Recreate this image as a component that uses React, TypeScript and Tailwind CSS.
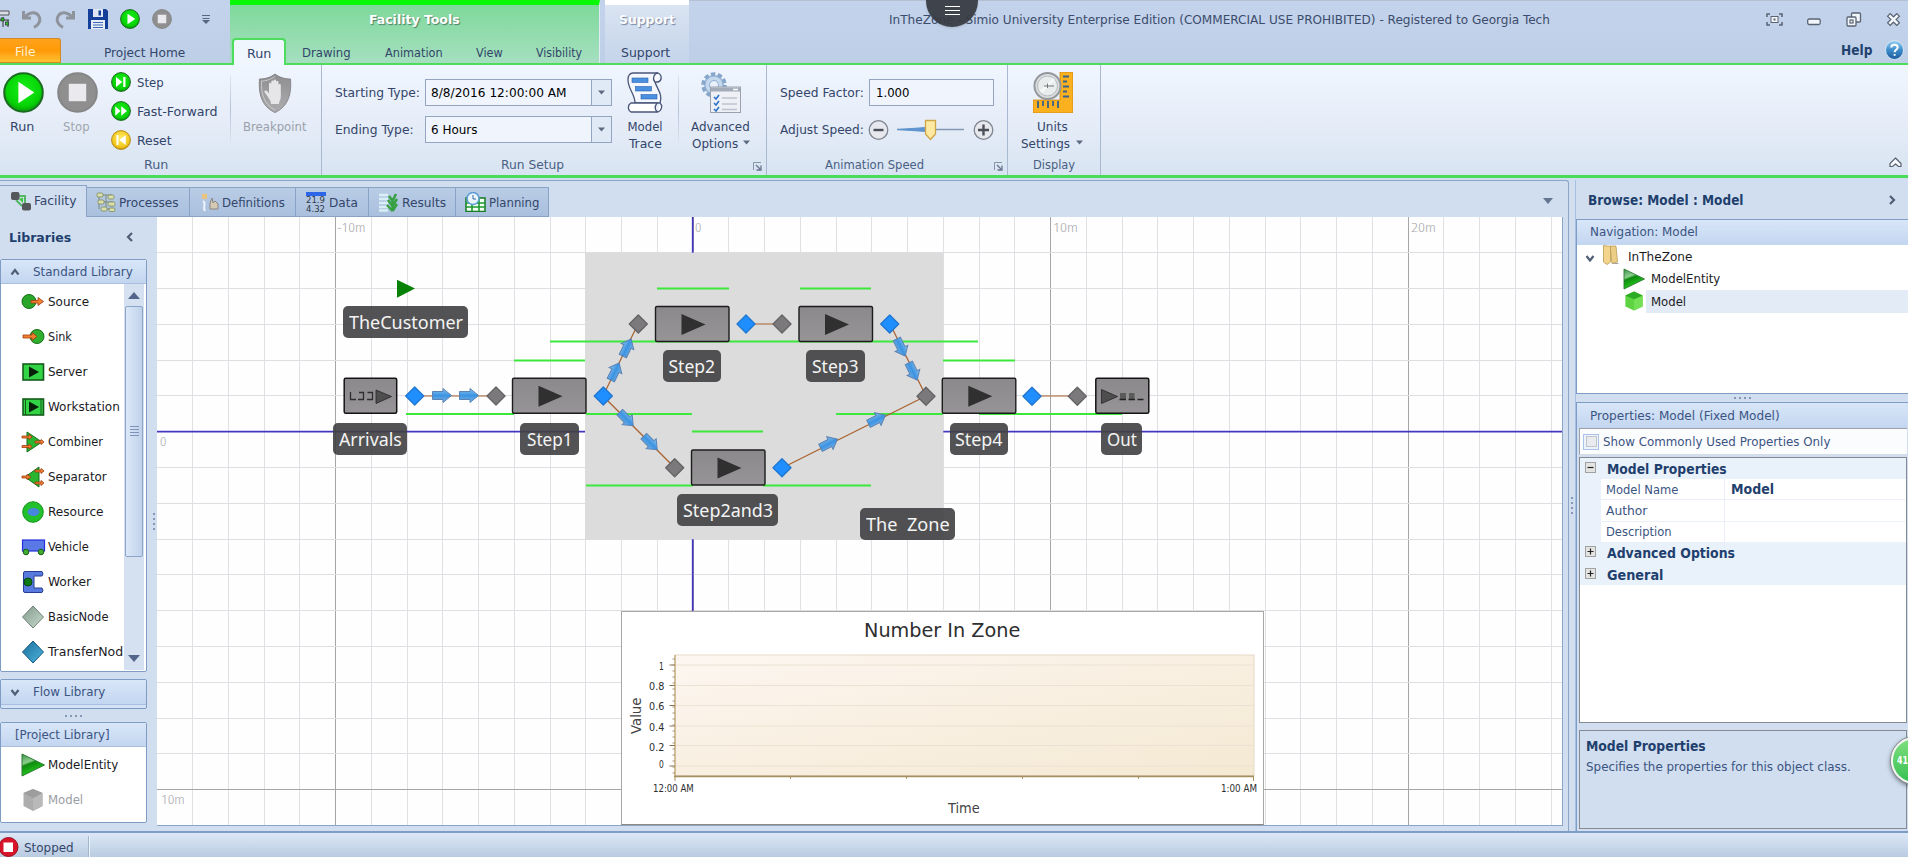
import { useLayoutEffect, useRef, type ReactNode } from 'react';

/* Text fitted to a fixed advance width. */
function T({ w, children, className = '' }: { w: number; children: string; className?: string }) {
  const inner = useRef<HTMLSpanElement>(null);
  useLayoutEffect(() => {
    const el = inner.current;
    if (el && el.offsetWidth) el.style.transform = `scaleX(${w / el.offsetWidth})`;
  }, [w, children]);
  return (
    <span className={`inline-block shrink-0 whitespace-pre ${className}`} style={{ width: w }}>
      <span ref={inner} className="inline-block origin-left">{children}</span>
    </span>
  );
}

function Defs() {
  return (
    <svg className="absolute h-0 w-0" aria-hidden="true">
      <defs>
        <radialGradient id="gGreen" cx="50%" cy="40%" r="60%">
          <stop offset="0" stopColor="#17ee17" />
          <stop offset="0.75" stopColor="#06d306" />
          <stop offset="1" stopColor="#089a08" />
        </radialGradient>
        <radialGradient id="gGold" cx="50%" cy="40%" r="60%">
          <stop offset="0" stopColor="#fff06a" />
          <stop offset="0.8" stopColor="#f2c51a" />
          <stop offset="1" stopColor="#c89510" />
        </radialGradient>
        <linearGradient id="gTri" x1="0" y1="0" x2="0.4" y2="1">
          <stop offset="0" stopColor="#3f8f4a" />
          <stop offset="0.4" stopColor="#8ccf8e" />
          <stop offset="0.5" stopColor="#0f8a10" />
          <stop offset="1" stopColor="#27d61c" />
        </linearGradient>
        <linearGradient id="gSrv" x1="0" y1="0" x2="0" y2="1">
          <stop offset="0" stopColor="#8b898b" />
          <stop offset="1" stopColor="#969496" />
        </linearGradient>
        <linearGradient id="gArrow" x1="0" y1="0" x2="0" y2="1">
          <stop offset="0" stopColor="#8fc4ef" />
          <stop offset="0.5" stopColor="#3b93e2" />
          <stop offset="1" stopColor="#7db4e6" />
        </linearGradient>
        <linearGradient id="gShield" x1="0" y1="0" x2="0" y2="1">
          <stop offset="0" stopColor="#8e8e90" />
          <stop offset="1" stopColor="#adadaf" />
        </linearGradient>
        <linearGradient id="gNode" x1="0" y1="0" x2="1" y2="1">
          <stop offset="0" stopColor="#83988b" />
          <stop offset="1" stopColor="#c8dccf" />
        </linearGradient>
        <linearGradient id="gTransfer" x1="0" y1="0" x2="1" y2="1">
          <stop offset="0" stopColor="#1c6f9c" />
          <stop offset="1" stopColor="#4db4dc" />
        </linearGradient>
        <linearGradient id="gHelp" x1="0" y1="0" x2="0" y2="1">
          <stop offset="0" stopColor="#9ed4f2" />
          <stop offset="0.5" stopColor="#3c8dcc" />
          <stop offset="1" stopColor="#1b5a9c" />
        </linearGradient>
        <linearGradient id="gPlot" x1="0" y1="0" x2="1" y2="1">
          <stop offset="0" stopColor="#fdf6f0" />
          <stop offset="0.45" stopColor="#f9f0e3" />
          <stop offset="1" stopColor="#f4e9d2" />
        </linearGradient>
      </defs>
    </svg>
  );
}

function Round({ size, kind }: { size: number; kind: 'play' | 'stop' | 'step' | 'ff' | 'reset' }) {
  const fill = kind === 'stop' ? '#8f8f8f' : kind === 'reset' ? 'url(#gGold)' : 'url(#gGreen)';
  const edge = kind === 'stop' ? '#868686' : kind === 'reset' ? '#b58a18' : '#1c6b22';
  return (
    <svg width={size} height={size} viewBox="0 0 40 40" className="shrink-0">
      <circle cx="20" cy="20" r="18.8" fill={fill} stroke={edge} strokeWidth="2" />
      {kind === 'play' && <path d="M15 9.5V30.5L30.500 20Z" fill="#fff" />}
      {kind === 'stop' && <rect x="11.500" y="11.500" width="17" height="17" fill="#e9e9ee" />}
      {kind === 'step' && <path d="M10 10V30L22.500 20ZM24.500 10H29V30H24.500Z" fill="#fff" />}
      {kind === 'ff' && <path d="M8.500 10.500V29.500L19 20ZM20.500 10.500V29.500L32 20Z" fill="#fff" />}
      {kind === 'reset' && <path d="M29.500 10V30L17 20ZM11 10H15V30H11Z" fill="#fff" />}
    </svg>
  );
}

const Down = ({ className = '' }: { className?: string }) => (
  <svg width="7" height="5" viewBox="0 0 7 5" className={`shrink-0 ${className}`}><path d="M0 0.500H7L3.500 4.500Z" fill="#5d6b82" /></svg>
);

function Big({ icon, children, className }: { icon: ReactNode; children: ReactNode; className: string }) {
  return (
    <div className={`flex flex-col items-center pt-[7px] ${className}`}>
      <div className="mb-[5px] flex h-[41px] items-center">{icon}</div>
      {children}
    </div>
  );
}
const Line = ({ children }: { children: ReactNode }) => <div className="flex h-[17px] items-center">{children}</div>;

function Group({ className, caption, launcher, children }: { className: string; caption: ReactNode; launcher?: boolean; children: ReactNode }) {
  return (
    <div className={`flex shrink-0 flex-col border-r border-[#a9b9d2] ${className}`}>
      <div className="flex h-[89px]">{children}</div>
      <div className="flex h-[21px] items-center text-[#4a5f84]">
        {caption}
        {launcher && (
          <svg width="9" height="9" viewBox="0 0 9 9" className="mt-[3px] mr-[4px] ml-auto shrink-0"><path d="M0.500 8V0.500H8" fill="none" stroke="#8795ab" /><path d="M3 3L7 7M8 3.500V8H3.500" fill="none" stroke="#66748c" strokeWidth="1.300" /></svg>
        )}
      </div>
    </div>
  );
}

function Combo({ w, text }: { w: number; text: string }) {
  return (
    <div className="flex h-[27px] w-[187px] items-center border border-[#93a5c0] bg-[#f0f5fd] pl-[5px] text-black">
      <T w={w}>{text}</T>
      <div className="ml-auto flex h-full w-[20px] items-center justify-center border-l border-[#93a5c0] bg-[#e0e9f6]"><Down /></div>
    </div>
  );
}

function Header() {
  return (
    <div className="flex h-[65px] border-b-2 border-[#4ddc5c] bg-linear-to-b from-[#c3d3ec] to-[#bdcfe6]">
      <div className="flex w-[230px] shrink-0 flex-col">
        <div className="flex h-[38px] items-center">
          <svg width="10" height="20" viewBox="0 0 10 20"><path d="M0 2H9V6H0" fill="#d8dde6" stroke="#555" /><path d="M0 11H9M3 8V18M8 11V18" stroke="#333" fill="none" /><rect x="1" y="9" width="3" height="3" fill="#2cc02c" stroke="#222" strokeWidth=".6" /><rect x="5.500" y="13" width="3" height="3" fill="#2cc02c" stroke="#222" strokeWidth=".6" /></svg>
          <svg width="20" height="20" viewBox="0 0 20 20" className="ml-[12px]"><path d="M1.500 2V9H9M2.500 8.500C6 3.500 13 2 16.500 6.500C19.500 11 17 16 12 18.500" fill="none" stroke="#8e939c" strokeWidth="3" /></svg>
          <svg width="20" height="20" viewBox="0 0 20 20" className="ml-[13px]"><path d="M18.500 2V9H11M17.500 8.500C14 3.500 7 2 3.500 6.500C.5 11 3 16 8 18.500" fill="none" stroke="#8e939c" strokeWidth="3" /></svg>
          <svg width="20" height="20" viewBox="0 0 20 20" className="ml-[13px]"><path d="M0 0H18L20 2V20H0Z" fill="#15409a" /><rect x="5" y="0" width="10" height="8" fill="#dfe7f4" /><rect x="10.500" y="1.500" width="2.500" height="5" fill="#15409a" /><rect x="3" y="11" width="14" height="9" fill="#e8eef8" /><path d="M5 13.500H15M5 16H15M5 18.500H15" stroke="#3a68b4" /></svg>
          <div className="ml-[12px] flex"><Round size={20} kind="play" /></div>
          <div className="ml-[12px] flex"><Round size={20} kind="stop" /></div>
          <svg width="8" height="9" viewBox="0 0 8 9" className="ml-[30px]"><path d="M0 .5H8M.5 3.500H7.500" stroke="#5a6680" /><path d="M0 5H8L4 9Z" fill="#5a6680" /></svg>
        </div>
        <div className="flex h-[25px] items-center">
          <div className="flex h-[25px] w-[61px] items-center rounded-tr-[3px] border border-l-0 border-[#d18a28] bg-linear-to-b from-[#ffa21a] via-[#ff9a05] to-[#ffc02e] pt-[2px] pl-[15px] text-[#fff2d0]"><T w={20}>File</T></div>
          <T w={81} className="mt-[3px] ml-[43px]">Project Home</T>
        </div>
      </div>
      <div className="flex w-[370px] shrink-0 flex-col border-t-[5px] border-r border-r-[#dfeaf3] border-t-[#08f808] bg-linear-to-b from-[#7ed99a] to-[#a5dfc0]">
        <div className="flex h-[33px] shrink-0 items-center justify-center pb-[4px] font-bold text-white [text-shadow:1px_1px_1px_#4d7f68]"><T w={91}>Facility Tools</T></div>
        <div className="flex h-[25px] shrink-0 items-center pt-[3px]">
          <div className="-mt-[3px] ml-[2px] flex h-[27px] w-[54px] items-center justify-center self-start rounded-t-[4px] border-2 border-b-0 border-[#4ddc5c] bg-[#f0f6fe] pt-px"><T w={24}>Run</T></div>
          <T w={49} className="ml-[16px]">Drawing</T>
          <T w={58} className="ml-[34px]">Animation</T>
          <T w={27} className="ml-[33px]">View</T>
          <T w={46} className="ml-[33px]">Visibility</T>
        </div>
      </div>
      <div className="ml-[5px] flex w-[84px] shrink-0 flex-col items-center border-t-[5px] border-white bg-linear-to-b from-[#dae4f2] to-[#c4d4ea]">
        <div className="flex h-[33px] shrink-0 items-center pb-[4px] font-bold text-[#fbfcff] [text-shadow:1px_1px_1px_#6f83a3]"><T w={56}>Support</T></div>
        <div className="flex h-[25px] shrink-0 items-center pt-[3px] pr-[3px]"><T w={49}>Support</T></div>
      </div>
      <div className="flex flex-1 flex-col border-t border-[#b4c0d2]">
        <div className="flex h-[37px] items-center pl-[200px] text-[#3c4c6c]">
          <T w={661} className="-mt-px">InTheZone - Simio University Enterprise Edition (COMMERCIAL USE PROHIBITED) - Registered to Georgia Tech</T>
          <svg width="17" height="13" viewBox="0 0 17 13" className="ml-[216px]"><path d="M1 4V1H4M13 1H16V4M16 9V12H13M4 12H1V9" fill="none" stroke="#5a6473" strokeWidth="1.500" /><rect x="5" y="3.500" width="7" height="6" fill="#f2f6fb" stroke="#5a6473" /><rect x="7.500" y="5.500" width="2" height="2" fill="#5a6473" /></svg>
          <svg width="14" height="13" viewBox="0 0 14 13" className="ml-[24px]"><rect x=".7" y="6" width="12.500" height="5.500" rx="1.500" fill="#f2f6fb" stroke="#5a6473" strokeWidth="1.300" /></svg>
          <svg width="16" height="15" viewBox="0 0 16 15" className="ml-[25px]"><rect x="5.500" y="1" width="9" height="9" rx="1" fill="#f2f6fb" stroke="#5a6473" strokeWidth="1.300" /><rect x="1" y="5" width="9" height="9" rx="1" fill="#f2f6fb" stroke="#5a6473" strokeWidth="1.300" /><rect x="4" y="8" width="3" height="3" fill="none" stroke="#5a6473" strokeWidth="1.200" /></svg>
          <svg width="15" height="13" viewBox="0 0 15 13" className="ml-[24px]"><path d="M2.500 1.500L12.500 11.500M12.500 1.500L2.500 11.500" stroke="#5a6473" strokeWidth="5" /><path d="M3.300 2.300L11.700 10.700M11.700 2.300L3.300 10.700" stroke="#f2f6fb" strokeWidth="2.500" /></svg>
        </div>
        <div className="flex h-[24px] items-center justify-end pr-[4px]">
          <T w={31} className="mr-[13px] text-[14px] font-bold text-[#22416e]">Help</T>
          <svg width="19" height="20" viewBox="0 0 19 20"><ellipse cx="9.500" cy="10" rx="9" ry="9.500" fill="url(#gHelp)" stroke="#d5e6f5" /><path d="M6.300 7.500C6.300 3.800 12.700 3.800 12.700 7.500C12.700 9.800 9.600 9.800 9.600 12.300M9.600 14V15.800" fill="none" stroke="#fff" strokeWidth="2" /></svg>
        </div>
      </div>
    </div>
  );
}

function Ribbon() {
  return (
    <div className="flex h-[113px] border-b-[3px] border-[#48dc58] bg-linear-to-b from-[#f0f6ff] via-[#e6edf8] to-[#d8e4f2]">
      <Group className="w-[322px]" caption={<T w={24} className="ml-[144px]">Run</T>}>
        <Big className="w-[47px]" icon={<Round size={41} kind="play" />}><Line><T w={24} className="mr-[3px]">Run</T></Line></Big>
        <Big className="ml-[7px] w-[47px] text-[#a0a5ad]" icon={<Round size={41} kind="stop" />}><Line><T w={27} className="mr-[2px]">Stop</T></Line></Big>
        <div className="ml-[10px] flex w-[119px] flex-col gap-[9px] pt-[7px]">
          <div className="flex h-[20px] items-center gap-[6px]"><Round size={20} kind="step" /><T w={27}>Step</T></div>
          <div className="flex h-[20px] items-center gap-[6px]"><Round size={20} kind="ff" /><T w={81}>Fast-Forward</T></div>
          <div className="flex h-[20px] items-center gap-[6px]"><Round size={20} kind="reset" /><T w={35}>Reset</T></div>
        </div>
        <div className="mt-[10px] h-[70px] w-px bg-linear-to-b from-[#e0e8f3] via-[#b4c2d7] to-[#e0e8f3]" />
        <Big className="w-[88px] text-[#9ba1ab]" icon={
          <svg width="34" height="40" viewBox="0 0 34 40"><path d="M17 1C12 5 6 6 1.500 6C.5 20 3 33 17 39.500C31 33 33.500 20 32.500 6C28 6 22 5 17 1Z" fill="url(#gShield)" stroke="#86868a" /><path d="M17 3.500C12 7 7 8 3.500 8C3 20 5.500 31 17 37" fill="none" stroke="#c9c9cc" /><path d="M10 24L6.500 19C6 17.500 8 17 9 18L11 20.500V11C11 9.400 13.300 9.400 13.300 11V17V8.500C13.300 7 15.700 7 15.700 8.500V17V7.500C15.700 6 18.200 6 18.200 7.500V17V9C18.200 7.500 20.500 7.500 20.500 9V18V12C20.500 10.500 22.800 10.500 22.800 12V23C22.800 27 21 28.500 21 31H13C13 28 11.500 26.500 10 24Z" fill="#e6e6e9" /></svg>
        }><Line><T w={64}>Breakpoint</T></Line></Big>
      </Group>

      <Group className="w-[445px]" launcher caption={<T w={63} className="ml-[179px]">Run Setup</T>}>
        <div className="flex w-[290px] flex-col gap-[10px] pt-[14px] pl-[13px]">
          <div className="flex items-center"><T w={85} className="mr-[5px]">Starting Type:</T><Combo w={136} text="8/8/2016 12:00:00 AM" /></div>
          <div className="flex items-center"><T w={79} className="mr-[11px]">Ending Type:</T><Combo w={46} text="6 Hours" /></div>
        </div>
        <Big className="ml-[8px] w-[50px]" icon={
          <svg width="36" height="41" viewBox="0 0 36 41"><path d="M6 1H31C35.500 3 35 9 31 10H28C30 17 36 22 33 31H8C8 22 1 17 1 8C1 3 3 1 6 1Z" fill="#f4f7fd" stroke="#4a567a" strokeWidth="1.300" /><path d="M28 10C25 7 27 1 31 1M4 31H30C27 35 28 39 31 40H4C.5 38 .5 33 4 31ZM31 40C35.500 38 35.500 33 33 31" fill="#fff" stroke="#4a567a" strokeWidth="1.300" /><g fill="#4a8fe0" stroke="#2b62ad" strokeWidth=".6"><rect x="5" y="6" width="16" height="4.500" /><rect x="8.500" y="14.500" width="16" height="4.500" /><rect x="14" y="22.500" width="16" height="4.500" /></g></svg>
        }><Line><T w={35}>Model</T></Line><Line><T w={33}>Trace</T></Line></Big>
        <div className="mt-[10px] ml-[8px] h-[70px] w-px bg-linear-to-b from-[#e0e8f3] via-[#b4c2d7] to-[#e0e8f3]" />
        <Big className="w-[83px]" icon={
          <svg width="40" height="41" viewBox="0 0 40 41"><circle cx="13" cy="13" r="10.500" fill="#b9cfe8" stroke="#87a6cb" strokeWidth="4.500" strokeDasharray="4.200 2.400" /><circle cx="13" cy="13" r="9" fill="#c4d8ee" stroke="#8fadd0" /><circle cx="13" cy="13" r="4.500" fill="#eaf1fa" stroke="#8fadd0" /><rect x="9.500" y="15" width="30" height="25.500" fill="#eef0f5" stroke="#9aa2b0" /><rect x="10" y="15.500" width="29" height="4" fill="#a3abb9" /><path d="M32 17.500H37" stroke="#fff" strokeWidth="1.500" /><path d="M13 25L15 27L18 23M13 31L15 33L18 29M13 37L15 39L18 35" fill="none" stroke="#2b74c9" strokeWidth="1.600" /><path d="M21 26H36M21 32H36M21 37.500H36" stroke="#bcc3cf" strokeWidth="1.500" /></svg>
        }>
          <Line><T w={59}>Advanced</T></Line>
          <Line><T w={46} className="mr-[5px]">Options</T><Down className="-mt-[3px]" /></Line>
        </Big>
      </Group>

      <Group className="w-[241px]" launcher caption={<T w={99} className="ml-[58px]">Animation Speed</T>}>
        <div className="flex flex-col gap-[10px] pt-[14px] pl-[13px]">
          <div className="flex items-center"><T w={84} className="mr-[5px]">Speed Factor:</T>
            <div className="flex h-[27px] w-[125px] items-center border border-[#93a5c0] bg-[#f0f5fd] pl-[6px] text-black"><T w={33}>1.000</T></div>
          </div>
          <div className="flex h-[27px] items-center"><T w={84} className="mr-[4px]">Adjust Speed:</T>
            <svg width="126" height="22" viewBox="0 0 126 22">
              <circle cx="10.500" cy="11" r="9.300" fill="#e6e8ee" stroke="#7f858f" strokeWidth="1.300" /><path d="M5.500 11H15.500" stroke="#4b5058" strokeWidth="2.400" />
              <path d="M29 10.500H96" stroke="#8496b3" strokeWidth="1.500" /><path d="M29 10.500L58 8.500V12.500Z" fill="#5f94d0" stroke="#5f94d0" />
              <path d="M57.500 1.500H67.500V15L62.500 20.500L57.500 15Z" fill="#fde9a2" stroke="#cfa647" strokeWidth="1.300" />
              <circle cx="115.500" cy="11" r="9.300" fill="#e6e8ee" stroke="#7f858f" strokeWidth="1.300" /><path d="M110 11H121M115.500 5.500V16.500" stroke="#4b5058" strokeWidth="2.400" />
            </svg>
          </div>
        </div>
      </Group>

      <Group className="w-[93px]" caption={<T w={42} className="ml-[25px]">Display</T>}>
        <Big className="w-[90px]" icon={
          <svg width="40" height="41" viewBox="0 0 40 41"><path d="M27 0H40V41H0V28H27Z" fill="#fbb01f" stroke="#c98613" strokeWidth=".8" /><path d="M30 4.500H36M30 9.500H34M30 14.500H36M30 19.500H34M30 24.500H36M5 29V36M10 29V34M15 29V36M20 29V34M25 29V36" stroke="#37638c" strokeWidth="1.800" /><circle cx="14.500" cy="14" r="13" fill="#dcdfe1" stroke="#94989c" strokeWidth="2" /><circle cx="14.500" cy="14" r="10" fill="#e9ecec" stroke="#b5b9bb" /><path d="M8 20L21 7" stroke="#fff" strokeWidth="3" opacity=".6" /><path d="M14.500 11.500V16M11 14H21" stroke="#777" /></svg>
        }>
          <Line><T w={31} className="mr-[2px]">Units</T></Line>
          <Line><T w={49} className="mr-[6px]">Settings</T><Down className="-mt-[3px] mr-[2px]" /></Line>
        </Big>
      </Group>
      <div className="flex flex-1 items-end justify-end pr-[6px] pb-[7px]">
        <svg width="13" height="11" viewBox="0 0 13 11"><path d="M6.500 1L12 6.500V9.500H9.500L6.500 7L3.500 9.500H1V6.500Z" fill="#f5f8fc" stroke="#56606f" strokeWidth="1.200" /></svg>
      </div>
    </div>
  );
}

function Tab({ className, icon, label, w }: { className: string; icon: ReactNode; label: string; w: number }) {
  return (
    <div className={`flex h-[30px] shrink-0 items-center gap-[3px] border border-l-0 border-[#89a3c7] bg-linear-to-b from-[#b9cce5] to-[#a9c0de] ${className}`}>
      {icon}<T w={w}>{label}</T>
    </div>
  );
}

function TabBar() {
  return (
    <div className="flex h-[36px] items-end">
      <div className="flex h-[32px] w-[87px] shrink-0 items-center gap-[3px] border-t border-r border-[#89a3c7] pb-[2px] pl-[11px]">
        <svg width="20" height="20" viewBox="0 0 20 20"><path d="M8 5H14V13M5 9L11 15" stroke="#55b865" strokeWidth="2" fill="none" /><path d="M8 8L12 6.500V12Z" fill="#3cc83c" /><rect x="0" y="1" width="8.500" height="8" rx="2" fill="#55585a" /><rect x="11" y="12" width="9" height="7.500" rx="2" fill="#55585a" /></svg>
        <T w={42}>Facility</T>
      </div>
      <Tab className="w-[103px] pl-[9px]" w={60} label="Processes" icon={<svg width="20" height="20" viewBox="0 0 20 20"><path d="M5 3H16M3 3V17M5 10H17M5 17H15M10 3V17" stroke="#7a8a78" fill="none" /><g fill="#d9dfae" stroke="#7b8552" strokeWidth=".8"><rect x="1" y="1" width="6" height="4" rx="1.500" /><rect x="12" y="3" width="6" height="4" rx="1.500" /><rect x="2" y="8" width="6" height="4" rx="1.500" /><rect x="12" y="10" width="7" height="4" rx="1.500" /><rect x="5" y="15" width="6" height="4" rx="1.500" /><rect x="13" y="16" width="6" height="3.500" rx="1.500" /></g></svg>} />
      <Tab className="w-[106px] pl-[10px]" w={63} label="Definitions" icon={<svg width="19" height="20" viewBox="0 0 19 20"><rect x="2" y="2" width="5" height="5" fill="#ecc37c" transform="rotate(-8 4 4)" /><path d="M5 19C2 14 7 12 3 9" stroke="#eef3fa" strokeWidth="2" fill="none" /><path d="M10 17V11L12 6L13 11L15 9L18 12V17Z" fill="#d6c9b4" stroke="#8b8581" strokeWidth="1" /></svg>} />
      <Tab className="w-[73px] pl-[10px]" w={29} label="Data" icon={<span className="flex h-[20px] w-[20px] flex-col border-t-[4px] border-[#2c66e8] text-[9px] leading-[9px] text-[#2f3845]"><T w={19}>21.9</T><T w={19}>4.32</T></span>} />
      <Tab className="w-[87px] pl-[10px]" w={44} label="Results" icon={<svg width="20" height="20" viewBox="0 0 20 20"><path d="M0 3H9M0 7H9M0 11H9M0 15H9M0 18.500H9" stroke="#d8eff6" strokeWidth="2.400" /><path d="M13.500 19V6M13.500 19L8 13M13.500 19L18 12M13.500 14L9 8M13.500 14L18 7M13.500 9L10 4M13.500 9L17 2" stroke="#37a043" strokeWidth="2.500" fill="none" /></svg>} />
      <Tab className="w-[93px] pl-[9px]" w={50} label="Planning" icon={<svg width="21" height="20" viewBox="0 0 21 20"><rect x="1" y="6" width="19" height="13.500" fill="#f4fff4" stroke="#157a23" strokeWidth="1.500" /><path d="M1 11H20M1 15H20M7 6V19M14 6V19" stroke="#1c9a2e" strokeWidth="1.600" /><circle cx="8" cy="6.500" r="6" fill="#eaf4fd" stroke="#5a9bd3" strokeWidth="1.500" /><path d="M8 3V7H11" stroke="#356a9c" fill="none" /></svg>} />
      <svg width="10" height="6" viewBox="0 0 10 6" className="mr-[15px] mb-[13px] ml-auto"><path d="M0 0H10L5 6Z" fill="#66758f" /></svg>
    </div>
  );
}

const Chevron = ({ d, className = '' }: { d: 'up' | 'down' | 'left' | 'right'; className?: string }) => {
  const p = { up: 'M1.500 7.500L5 3L8.500 7.500', down: 'M1.500 3L5 7.500L8.500 3', left: 'M7 1L3 5L7 9', right: 'M3 1L7 5L3 9' }[d];
  return <svg width="10" height="10" viewBox="0 0 10 10" className={`shrink-0 ${className}`}><path d={p} fill="none" stroke="#4f5d75" strokeWidth="2.200" /></svg>;
};

const orange = { fill: '#f08030', stroke: '#a33a10', strokeWidth: 0.8 };
const shapes: Record<string, ReactNode> = {
  source: <><circle cx="7" cy="10.500" r="7" fill="#2aa52a" stroke="#167016" /><path d="M9 9.500H16V6.500L21.500 10.500L16 14.500V12H9Z" {...orange} /></>,
  sink: <><circle cx="15" cy="10.500" r="7" fill="#2fae2f" stroke="#167016" /><path d="M1 9H10V6.500L15 10.500L10 14.500V12H1Z" {...orange} /></>,
  server: <><rect x="1" y="3" width="20.500" height="16" fill="#32d344" stroke="#145c1c" strokeWidth="1.600" /><path d="M7 5.500V16.500L17 11Z" fill="#06200a" /></>,
  workstation: <><rect x="1" y="3" width="20.500" height="16" fill="#32d344" stroke="#145c1c" strokeWidth="1.600" /><path d="M3.500 3V19M19 3V19" stroke="#145c1c" /><path d="M7 5.500V16.500L17 11Z" fill="#06200a" /></>,
  combiner: <><path d="M5 1V21L20 11Z" fill="#29b52f" stroke="#176f1b" /><path d="M0 5H7V3.500L10 6L7 8.500V7H0ZM0 14.500H7V13L10 15.500L7 18V16.500H0ZM13 10H19V8.500L22 11L19 13.500V12H13Z" {...orange} /></>,
  separator: <><path d="M17 1V21L3 11Z" fill="#29b52f" stroke="#176f1b" /><path d="M0 10H5V8.500L9 11L5 13.500V12H0ZM13 4H19V2.500L22 5L19 7.500V6H13ZM13 16H19V14.500L22 17L19 19.500V18H13Z" {...orange} /></>,
  resource: <><circle cx="11" cy="11" r="10.300" fill="#22c02a" stroke="#17951e" /><ellipse cx="11.500" cy="11" rx="6" ry="4" fill="#4686dc" /></>,
  vehicle: <><rect x=".5" y="4" width="22" height="11" fill="#5a78e6" stroke="#2630d8" strokeWidth="1.200" /><circle cx="4" cy="16" r="2.800" fill="#3fae30" stroke="#1e5c18" /><circle cx="19" cy="16" r="2.800" fill="#3fae30" stroke="#1e5c18" /></>,
  worker: <><path d="M3 .5H20Q22 3 20 5H12V17H20Q22 19.500 20 21.500H3Q1.500 21.500 1.500 20V2Q1.500.5 3 .5Z" fill="#587adf" stroke="#263e92" /><circle cx="6" cy="11" r="4" fill="#0d7a15" stroke="#0a4710" /></>,
  basic: <path d="M11 0L21.500 11L11 22L.5 11Z" fill="url(#gNode)" stroke="#6f8377" />,
  transfer: <path d="M11 0L21.500 11L11 22L.5 11Z" fill="url(#gTransfer)" stroke="#155a80" />,
  entity: <path d="M0 0L22.500 11L0 22Z" fill="url(#gTri)" stroke="#2d7a33" />,
  cubeGray: <><path d="M11 0L20.500 4V17L11 22L1.500 17V4Z" fill="#adadad" /><path d="M11 9L20.500 4V17L11 22Z" fill="#b9b9b9" /><path d="M1.500 4L11 0L20.500 4L11 9Z" fill="#9d9d9d" /></>,
  cube: <><path d="M11 .5L20.500 5V17L11 21.500L1.500 17V5Z" fill="#5fd442" /><path d="M11 9L20.500 5V17L11 21.500Z" fill="#73e055" /><path d="M1.500 5L11 .5L20.500 5L11 9Z" fill="#2cab25" /></>,
};
const Shape = ({ name, size = 22 }: { name: string; size?: number }) => (
  <svg width={size} height={size} viewBox="0 0 22 22" className="shrink-0 overflow-visible">{shapes[name]}</svg>
);

const library: [string, string, number][] = [
  ['source', 'Source', 41], ['sink', 'Sink', 24], ['server', 'Server', 39], ['workstation', 'Workstation', 72],
  ['combiner', 'Combiner', 55], ['separator', 'Separator', 59], ['resource', 'Resource', 56], ['vehicle', 'Vehicle', 41],
  ['worker', 'Worker', 43], ['basic', 'BasicNode', 61], ['transfer', 'TransferNod', 75],
];
const headBar = 'flex shrink-0 items-center bg-linear-to-b from-[#d8e6f8] to-[#c3d6f0] text-[#3b5482]';

function Item({ icon, label, w, className = '' }: { icon: string; label: string; w: number; className?: string }) {
  return <div className={`flex h-[35px] items-center gap-[4px] pl-[21px] text-[#1b1b1f] ${className}`}><Shape name={icon} /><T w={w}>{label}</T></div>;
}

const Dots = ({ vertical }: { vertical?: boolean }) => (
  <div className={`flex gap-[3px] ${vertical ? 'flex-col' : ''}`}>
    {[0, 1, 2, 3].map((i) => <i key={i} className="h-[2px] w-[2px] bg-[#8497b3]" />)}
  </div>
);

function Sidebar() {
  return (
    <div className="flex w-[147px] shrink-0 flex-col pb-[3px]">
      <div className="flex h-[42px] items-center justify-between pr-[12px] pb-[2px] pl-[9px] font-bold text-[#1f3f6d]"><T w={62}>Libraries</T><Chevron d="left" /></div>
      <div className="flex h-[413px] flex-col rounded-[2px] border border-[#7f9cc4] bg-white">
        <div className={`${headBar} h-[24px] border-b border-[#a9bfdf]`}><Chevron d="up" className="ml-[9px]" /><T w={100} className="ml-[13px]">Standard Library</T></div>
        <div className="flex h-[386px]">
          <div className="w-[123px] overflow-hidden">{library.map(([i, l, w]) => <Item key={i} icon={i} label={l} w={w} />)}</div>
          <div className="flex w-[20px] flex-col items-center justify-between bg-[#d5e1f0] pt-[8px] pb-[8px]">
            <svg width="12" height="7" viewBox="0 0 12 7"><path d="M0 7H12L6 0Z" fill="#53658a" /></svg>
            <div className="-mt-[92px] flex h-[251px] w-[18px] flex-col items-center justify-center gap-[2px] rounded-[2px] border border-[#8ba5c9] bg-linear-to-r from-[#dce8f8] to-[#bfd2eb]">
              <i className="h-px w-[9px] bg-[#7c93b8]" /><i className="h-px w-[9px] bg-[#7c93b8]" /><i className="h-px w-[9px] bg-[#7c93b8]" /><i className="h-px w-[9px] bg-[#7c93b8]" />
            </div>
            <svg width="12" height="7" viewBox="0 0 12 7"><path d="M0 0H12L6 7Z" fill="#53658a" /></svg>
          </div>
        </div>
      </div>
      <div className="mt-[7px] h-[30px] rounded-[2px] border border-[#7f9cc4] bg-[#d3e2f6]">
        <div className={`${headBar} h-[25px] border-b border-[#a9bfdf] pb-px`}><Chevron d="down" className="ml-[9px]" /><T w={72} className="ml-[13px]">Flow Library</T></div>
      </div>
      <div className="flex h-[13px] items-center justify-center pr-px"><Dots /></div>
      <div className="h-[101px] rounded-[2px] border border-[#7f9cc4] bg-white">
        <div className={`${headBar} h-[24px] border-b border-[#a9bfdf] pl-[14px]`}><T w={95}>[Project Library]</T></div>
        <Item icon="entity" label="ModelEntity" w={70} />
        <Item icon="cubeGray" label="Model" w={35} className="text-[#9a9da3]" />
      </div>
    </div>
  );
}

/* Model canvas: drawn in window coordinates through the svg viewBox. */
const OX = 157;
const OY = 217;
const vert = Array.from({ length: 39 }, (_, i) => i - 14);
const horiz = Array.from({ length: 16 }, (_, i) => i - 5);
const greens: [number, number, number][] = [
  [288.5, 657, 729], [288.5, 800, 871], [341.5, 550, 978], [360.5, 514, 585], [360.5, 943, 1015], [414, 406, 514],
  [414, 586, 692], [414, 836, 943], [414, 979, 1122], [431.5, 692, 763], [485.5, 586, 693], [485.5, 763, 871],
];
const links: [number, number, number, number][] = [
  [414, 396, 496, 396], [603, 396, 638, 324], [603, 396, 675, 468], [746, 324, 782, 324], [890, 324, 926, 396], [782, 468, 926, 396], [1032, 396, 1077, 396],
];
const arrows: [number, number, number][] = [
  [442, 395.5, 0], [469, 395.5, 0], [615, 371.5, -64], [627, 347.500, -64], [626.5, 419, 45], [650.5, 443, 45],
  [901, 347.500, 64], [913, 371.500, 64], [829, 443.500, -27], [877, 419.500, -27],
];
const diamonds: [number, number, boolean][] = [
  [414.7, 396, true], [496, 396, false], [603.3, 396, true], [638.3, 324, false], [674.7, 467.700, false], [746, 324, true],
  [782, 324, false], [889.7, 324, true], [926, 396.300, false], [782, 467.700, true], [1032, 396.300, true], [1077.300, 396.300, false],
];
const servers: [number, number][] = [[512.5, 378.3], [655.5, 306.500], [799, 306.500], [691.5, 450], [942.3, 378.3]];
const labels: [string, number, number, number, number][] = [
  ['TheCustomer', 343, 306, 125, 114], ['Arrivals', 333, 423, 74, 63], ['Step1', 520, 423, 59, 46], ['Step2', 663, 350, 58, 47],
  ['Step3', 806, 350, 59, 47], ['Step2and3', 677, 494, 101, 90], ['The  Zone', 860, 508, 95, 84], ['Step4', 950, 423, 58, 48], ['Out', 1101, 423, 41, 30],
];
const marks: [string, number, number, number][] = [['-10m', 337, 226.5, 28], ['0', 695, 226.5, 6], ['10m', 1053, 226.5, 25], ['20m', 1411, 226.5, 25], ['0', 160, 440.5, 6], ['10m', 161, 798.5, 24]];

function Chart() {
  const ticks: [string, number][] = [['1', 665], ['0.8', 685.5], ['0.6', 705.5], ['0.4', 726], ['0.2', 745.5], ['0', 766]];
  const minors = Array.from({ length: 20 }, (_, i) => 659 + i * 6);
  return (
    <div className="absolute top-[394px] left-[464px] h-[214px] w-[643px] border border-[#a9a6a6] border-b-[#8d887c] bg-white text-[#2e2e2e]">
      <svg width="641" height="212" viewBox="622 612 641 212" className="absolute top-0 left-0">
        <rect x="675" y="655" width="579" height="121" fill="url(#gPlot)" stroke="#e6d9c8" />
        {ticks.map(([t, y]) => <path key={t} d={`M675 ${y}H1254`} stroke="#ece2d3" />)}
        {ticks.map(([t, y]) => <path key={t} d={`M669.500 ${y}H675`} stroke="#8a7550" />)}
        {minors.map((y) => <path key={y} d={`M672.500 ${y}H675`} stroke="#a59474" />)}
        <path d="M675 655V781M1253.500 776V781M790.500 776V779M906.500 776V779M1022.500 776V779M1138.500 776V779" stroke="#b39458" />
        <path d="M674 776.300H1254" stroke="#a48e62" strokeWidth="1.800" />
      </svg>
      <div className="absolute top-[6px] left-[242px] text-[20px] leading-[24px]"><T w={156}>Number In Zone</T></div>
      <div className="absolute top-[45px] left-[15px] flex w-[27px] flex-col items-end text-[10px]">
        {ticks.map(([t], i) => <span key={t} className={`flex items-center ${i === 5 ? 'h-[14px]' : 'h-[20.2px]'}`}><T w={t.length > 1 ? 15 : 5}>{t}</T></span>)}
      </div>
      <div className="absolute top-[97px] left-[-4px] -rotate-90 text-[14px] leading-[14px] text-[#444]"><T w={36}>Value</T></div>
      <div className="absolute top-[171px] left-[31px] text-[10px] leading-[12px]"><T w={41}>12:00 AM</T></div>
      <div className="absolute top-[171px] left-[599px] text-[10px] leading-[12px]"><T w={36}>1:00 AM</T></div>
      <div className="absolute top-[188px] left-[326px] text-[14px] leading-[16px] text-[#444]"><T w={32}>Time</T></div>
    </div>
  );
}

function Canvas() {
  return (
    <div className="relative h-[609px] w-[1406px] shrink-0 overflow-hidden border-r border-b border-[#8ba5c9] bg-[#fefefe]">
      <svg width="1405" height="608" viewBox="157 217 1405 608" className="absolute top-0 left-0">
        {vert.map((k) => <path key={k} d={`M${Math.round(692.5 + 35.75 * k) + 0.5} 217V825`} stroke={k % 10 ? '#e2dfe5' : '#a6a6a8'} />)}
        {horiz.map((k) => <path key={k} d={`M157 ${Math.round(431.1 + 35.8 * k) + 0.5}H1562`} stroke={k % 10 ? '#e0dde3' : '#a6a6a8'} />)}
        <path d="M692.700 217V825M157 431.600H1562" stroke="#4338bd" strokeWidth="1.700" />
        <rect x="585" y="252.700" width="358.300" height="286.500" fill="#dcdcdc" />
        {greens.map(([y, a, b]) => <path key={`${y}-${a}`} d={`M${a} ${y}H${b}`} stroke="#3be83b" strokeWidth="1.800" />)}
        {links.map(([a, b, c, d]) => <path key={`${a}${b}${c}${d}`} d={`M${a} ${b}L${c} ${d}`} stroke="#a8602c" strokeWidth="1.200" />)}
        {servers.map(([x, y]) => (
          <g key={`${x}${y}`}>
            <rect x={x} y={y} width="73.500" height="35" rx="1.500" fill="url(#gSrv)" stroke="#1c1c1c" strokeWidth="1.400" />
            <path d={`M${x + 26} ${y + 7.500}V${y + 28.500}L${x + 50} ${y + 18}Z`} fill="#303030" />
          </g>
        ))}
        <rect x="344.200" y="378.200" width="52.500" height="35" rx="1.500" fill="url(#gSrv)" stroke="#141414" strokeWidth="1.500" />
        <path d="M350.500 392V399.500H356M359 392.500H363.500V399.500H358M367.500 392.500H372.500V399.500H367" fill="none" stroke="#2e2e2e" strokeWidth="1.300" />
        <path d="M376 390V403.500L391.500 396.500Z" fill="#4e4e4e" stroke="#262626" strokeWidth=".8" />
        <rect x="1095.800" y="378.200" width="53" height="35" rx="1.500" fill="url(#gSrv)" stroke="#141414" strokeWidth="1.500" />
        <path d="M1101.500 389.500V403.500L1117.500 396.500Z" fill="#4e4e4e" stroke="#262626" strokeWidth=".8" />
        <path d="M1120 393H1126V399.500H1120ZM1129 393H1134.500V399.500H1129Z" fill="#5a5a5a" /><path d="M1119.500 399.500H1126M1128.500 399.500H1135M1137.500 399.500H1143.500" stroke="#222" strokeWidth="1.400" />
        {arrows.map(([x, y, r]) => <path key={`${x}${y}`} transform={`translate(${x} ${y}) rotate(${r})`} d="M-9.500 -4H1V-7L9.500 0L1 7V4H-9.500Z" fill="url(#gArrow)" stroke="#5a83b4" strokeWidth="1" />)}
        {diamonds.map(([x, y, b]) => <path key={`${x}${y}`} d={`M${x} ${y - 9}L${x + 9} ${y}L${x} ${y + 9}L${x - 9} ${y}Z`} fill={b ? '#1f8fff' : '#7b797b'} stroke={b ? '#2277cf' : '#666466'} strokeWidth="1.400" strokeLinejoin="round" />)}
        <path d="M397 279.800V297.800L415 288.600Z" fill="#078207" />
      </svg>
      {marks.map(([t, x, y, w]) => (
        <div key={`${t}${x}`} className="absolute text-[13px] leading-[14px] font-light text-[#aaaaac] [font-family:'Open_Sans','Noto_Sans',sans-serif]" style={{ left: x - OX, top: y - OY - 7 }}><T w={w}>{t}</T></div>
      ))}
      {labels.map(([t, x, y, w, tw]) => (
        <div key={t} className="absolute flex h-[32px] items-center justify-center rounded-[5px] bg-[#404042]/90 text-[17.5px] leading-[22px] text-[#f4f4f4] [font-family:'Noto_Sans',sans-serif]" style={{ left: x - OX, top: y - OY, width: w }}><T w={tw}>{t}</T></div>
      ))}
      <Chart />
    </div>
  );
}

function Cat({ open, label, w }: { open?: boolean; label: string; w: number }) {
  return (
    <div className="flex h-[21.200px] items-center bg-[#e9f1fb] pl-[5px] text-[14px] font-bold text-[#1f3f6d]">
      <svg width="11" height="11" viewBox="0 0 11 11" className="mb-[3px]"><rect x=".5" y=".5" width="10" height="10" fill="#e4e4e2" stroke="#a1a1a1" /><path d={open ? 'M2.500 5.500H8.500' : 'M2.500 5.500H8.500M5.500 2.500V8.500'} stroke="#222" strokeWidth="1.200" /></svg>
      <T w={w} className="ml-[11px]">{label}</T>
    </div>
  );
}
function Prop({ label, w, children }: { label: string; w: number; children?: ReactNode }) {
  return (
    <div className="flex h-[21.200px] bg-[#eaf1fa] pl-[21px]">
      <div className="flex w-[124px] items-center border-r border-b border-[#e9eef7] bg-white pl-[5px]"><T w={w}>{label}</T></div>
      <div className="flex flex-1 items-center border-b border-[#eef2f9] bg-white pl-[6px] text-[14px] font-bold text-[#1f3f6d]">{children}</div>
    </div>
  );
}

function Browse() {
  return (
    <div className="flex w-[332px] shrink-0 flex-col">
      <div className="flex h-[39px] shrink-0 items-center justify-between pt-px pr-[11px] pl-[12px] text-[14px] font-bold text-[#1f3f6d]"><T w={156}>Browse: Model : Model</T><Chevron d="right" /></div>
      <div className="h-[175px] shrink-0 border border-r-0 border-[#7f9cc4] bg-white text-[#1b1b1f]">
        <div className={`${headBar} h-[25px] pb-[2px] pl-[13px]`}><T w={108}>Navigation: Model</T></div>
        <div className="flex h-[22.500px] items-center pl-[8px]">
          <Chevron d="down" className="mt-[3px]" />
          <svg width="16" height="20" viewBox="0 0 16 20" className="-mt-[2px] ml-[8px]"><path d="M7 1H13L14.500 17L9 18.500Z" fill="#eccf85" stroke="#b89a58" strokeWidth=".8" /><path d="M.5.500L7.500 1.500V17L4 19.500L.5 17Z" fill="#f3d48c" stroke="#b99a52" strokeWidth=".8" /><path d="M10 18.500H15.500" stroke="#a5a5a8" /></svg>
          <T w={64} className="ml-[9px]">InTheZone</T>
        </div>
        <div className="flex h-[22.500px] items-center pl-[47px]"><Shape name="entity" size={20} /><T w={69} className="ml-[7px]">ModelEntity</T></div>
        <div className="flex h-[22.500px] items-center pl-[47px]"><Shape name="cube" size={20} /><div className="ml-[2px] flex h-full flex-1 items-center bg-[#e3ebf6] pl-[5px]"><T w={35}>Model</T></div></div>
      </div>
      <div className="flex h-[8px] shrink-0 items-center justify-center"><Dots /></div>
      <div className="flex h-[429px] shrink-0 flex-col border-t border-l border-[#7f9cc4] pr-px pl-[2px]">
        <div className={`${headBar} -ml-[2px] h-[25px] pb-px pl-[13px]`}><T w={190}>Properties: Model (Fixed Model)</T></div>
        <div className="flex h-[27px] items-center border-t border-b border-l border-[#9a9fa8] border-b-[#d5dce6] bg-[#fbfcfe] pl-[3px] text-[#3b5482]">
          <div className="flex h-[16px] w-[16px] items-center justify-center border border-[#a9c3e8] bg-[#edf3fb]"><i className="h-[11px] w-[11px] border border-[#c2c5ca] bg-[#e9ebee]" /></div>
          <T w={227} className="ml-[4px]">Show Commonly Used Properties Only</T>
        </div>
        <div className="mt-[2px] h-[266px] border border-[#858a92] bg-white text-[#3b5482]">
          <Cat open label="Model Properties" w={120} />
          <Prop label="Model Name" w={72}><T w={43}>Model</T></Prop>
          <Prop label="Author" w={41} />
          <Prop label="Description" w={66} />
          <Cat label="Advanced Options" w={128} />
          <Cat label="General" w={56} />
        </div>
        <div className="mt-[7px] h-[99px] border border-[#858a92] pt-[5px] pl-[6px]">
          <div className="flex h-[20px] items-center text-[14px] font-bold text-[#1f3f6d]"><T w={120}>Model Properties</T></div>
          <div className="flex h-[20px] items-center text-[#3b5482]"><T w={265}>Specifies the properties for this object class.</T></div>
        </div>
      </div>
    </div>
  );
}

export default function App() {
  return (
    <div className="relative h-[857px] w-[1908px] overflow-hidden bg-[#d0deef] text-[13px] leading-none text-[#33456a] [font-family:'DejaVu_Sans_Condensed','DejaVu_Sans',sans-serif] [font-stretch:condensed]">
      <Defs />
      <Header />
      <Ribbon />
      <div className="flex h-[653px] pt-[2px]">
        <div className="flex w-[1569px] shrink-0 flex-col rounded-tr-[3px] border-t border-r border-[#8ba5c9]">
          <TabBar />
          <div className="flex">
            <Sidebar />
            <div className="flex w-[10px] shrink-0 items-center justify-end pr-[2px]"><Dots vertical /></div>
            <Canvas />
          </div>
        </div>
        <div className="flex w-[7px] shrink-0 items-center justify-center border-r border-[#a9bfdf]"><Dots vertical /></div>
        <Browse />
      </div>
      <div className="flex h-[26px] items-center border-t-2 border-[#7f9cc4] bg-linear-to-b from-[#dde8f7] to-[#b9cbe1] pt-[4px]">
        <svg width="19" height="20" viewBox="0 0 19 20"><circle cx="8.500" cy="10" r="9.500" fill="#d8142a" stroke="#9c0f1e" /><rect x="3.500" y="5.500" width="9.500" height="9.500" fill="#fff" /></svg>
        <T w={50} className="ml-[5px]">Stopped</T>
        <div className="ml-[14px] h-[22px] w-[2px] border-l border-[#a3b4cd] bg-[#eef4fb]" />
      </div>
      <div className="absolute top-0 left-[926px] flex h-[27px] w-[52px] flex-col items-center gap-[3px] rounded-b-[26px] bg-[#373b43]/95 pt-[6px] shadow">
        <i className="h-px w-[15px] bg-white" /><i className="h-px w-[15px] bg-white" /><i className="h-px w-[15px] bg-white" />
      </div>
      <div className="absolute top-[737px] left-[1891px] flex h-[47px] w-[47px] items-center rounded-full border-2 border-[#f4f6f4] bg-linear-to-b from-[#7ede7e] to-[#32c152] pl-[4px] text-[11px] font-bold text-white shadow-[0_2px_5px_#556] ring-1 ring-[#8a948c]"><T w={11}>41</T></div>
    </div>
  );
}
